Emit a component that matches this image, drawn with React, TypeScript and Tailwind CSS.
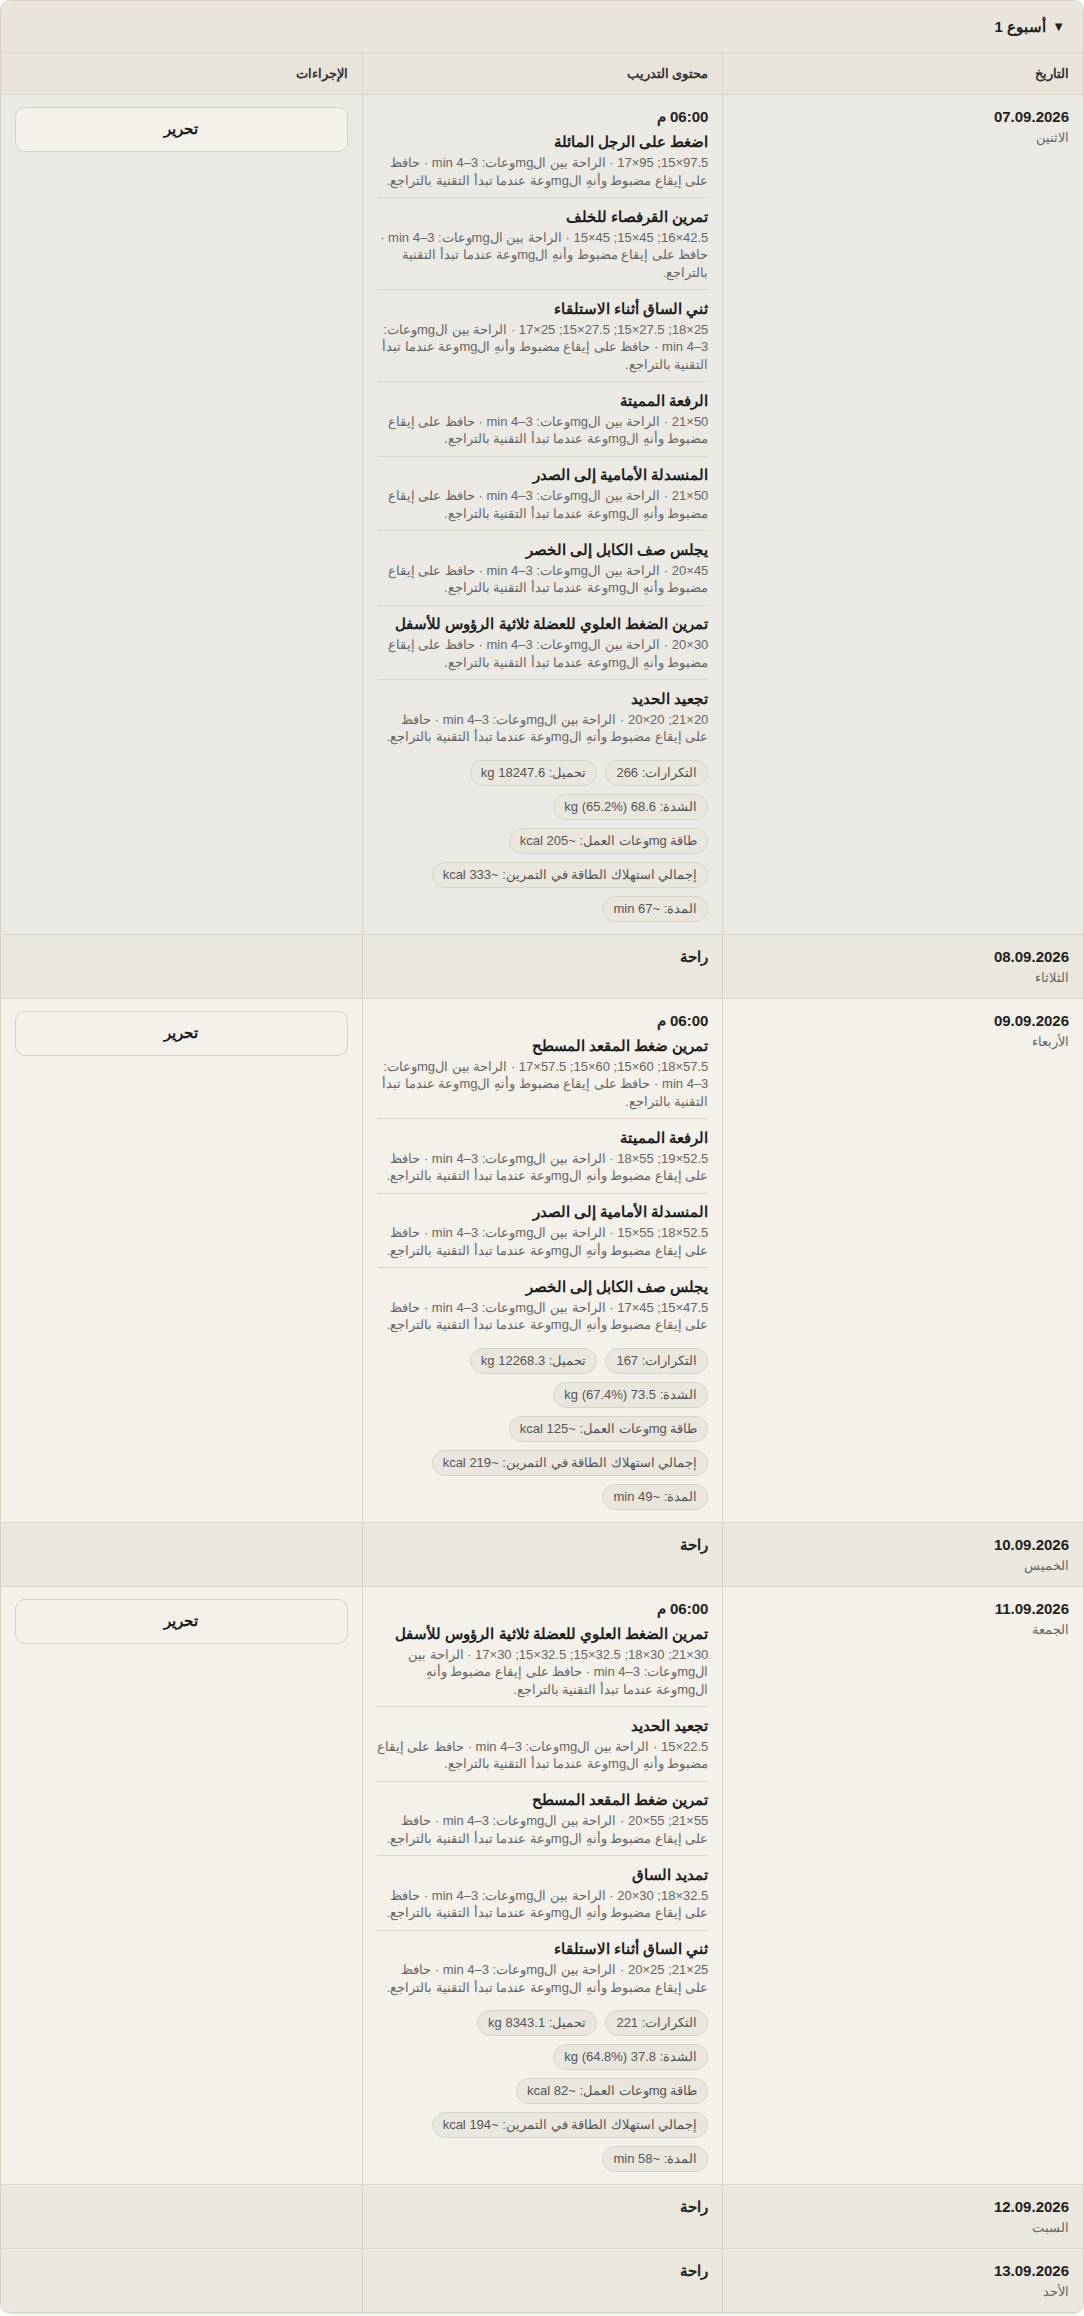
import React from "react";

const TAIL =
  " · الراحة بين الmgوعات: 3–4 min · حافظ على إيقاع مضبوط وأنهِ الmgوعة عندما تبدأ التقنية بالتراجع.";

type Exercise = { name: string; sets: string };
type Day = {
  date: string;
  day: string;
  rest?: boolean;
  muted?: boolean;
  time?: string;
  exercises?: Exercise[];
  stats?: string[][];
};

const days: Day[] = [
  {
    date: "07.09.2026",
    day: "الاثنين",
    muted: true,
    time: "06:00 م",
    exercises: [
      { name: "اضغط على الرجل المائلة", sets: "97.5×15; 95×17" },
      { name: "تمرين القرفصاء للخلف", sets: "42.5×16; 45×15; 45×15" },
      { name: "ثني الساق أثناء الاستلقاء", sets: "25×18; 27.5×15; 27.5×15; 25×17" },
      { name: "الرفعة المميتة", sets: "50×21" },
      { name: "المنسدلة الأمامية إلى الصدر", sets: "50×21" },
      { name: "يجلس صف الكابل إلى الخصر", sets: "45×20" },
      { name: "تمرين الضغط العلوي للعضلة ثلاثية الرؤوس للأسفل", sets: "30×20" },
      { name: "تجعيد الحديد", sets: "20×21; 20×20" },
    ],
    stats: [
      ["التكرارات: 266", "تحميل: 18247.6 kg"],
      ["الشدة: 68.6 kg (65.2%)"],
      ["طاقة mgوعات العمل: ~205 kcal"],
      ["إجمالي استهلاك الطاقة في التمرين: ~333 kcal"],
      ["المدة: ~67 min"],
    ],
  },
  { date: "08.09.2026", day: "الثلاثاء", rest: true },
  {
    date: "09.09.2026",
    day: "الأربعاء",
    time: "06:00 م",
    exercises: [
      { name: "تمرين ضغط المقعد المسطح", sets: "57.5×18; 60×15; 60×15; 57.5×17" },
      { name: "الرفعة المميتة", sets: "52.5×19; 55×18" },
      { name: "المنسدلة الأمامية إلى الصدر", sets: "52.5×18; 55×15" },
      { name: "يجلس صف الكابل إلى الخصر", sets: "47.5×15; 45×17" },
    ],
    stats: [
      ["التكرارات: 167", "تحميل: 12268.3 kg"],
      ["الشدة: 73.5 kg (67.4%)"],
      ["طاقة mgوعات العمل: ~125 kcal"],
      ["إجمالي استهلاك الطاقة في التمرين: ~219 kcal"],
      ["المدة: ~49 min"],
    ],
  },
  { date: "10.09.2026", day: "الخميس", rest: true },
  {
    date: "11.09.2026",
    day: "الجمعة",
    time: "06:00 م",
    exercises: [
      { name: "تمرين الضغط العلوي للعضلة ثلاثية الرؤوس للأسفل", sets: "30×21; 30×18; 32.5×15; 32.5×15; 30×17" },
      { name: "تجعيد الحديد", sets: "22.5×15" },
      { name: "تمرين ضغط المقعد المسطح", sets: "55×21; 55×20" },
      { name: "تمديد الساق", sets: "32.5×18; 30×20" },
      { name: "ثني الساق أثناء الاستلقاء", sets: "25×21; 25×20" },
    ],
    stats: [
      ["التكرارات: 221", "تحميل: 8343.1 kg"],
      ["الشدة: 37.8 kg (64.8%)"],
      ["طاقة mgوعات العمل: ~82 kcal"],
      ["إجمالي استهلاك الطاقة في التمرين: ~194 kcal"],
      ["المدة: ~58 min"],
    ],
  },
  { date: "12.09.2026", day: "السبت", rest: true },
  { date: "13.09.2026", day: "الأحد", rest: true },
];

function Chip({ label }: { label: string }) {
  return (
    <span className="rounded-full border border-[#d8d4c8] bg-[#e9e6de] px-2.5 py-[3px] text-[13px] leading-[18px] text-[#555]">
      {label}
    </span>
  );
}

function DayRow({ d }: { d: Day }) {
  const bg = d.rest ? "bg-[#eae7de]" : d.muted ? "bg-[#ebe9e3]" : "bg-[#f3f1ea]";
  return (
    <div className={`grid grid-cols-3 border-t border-[#dad6ca] ${bg}`}>
      <div className="border-l border-[#dad6ca] px-3.5 py-3">
        <div className="text-[15px] font-bold leading-5 text-[#222]">{d.date}</div>
        <div className="mt-[3px] text-[13px] leading-4 text-[#666]">{d.day}</div>
      </div>
      <div className="border-l border-[#dad6ca] px-3.5 py-3">
        {d.rest ? (
          <div className="text-[15px] font-bold leading-5 text-[#222]">راحة</div>
        ) : (
          <>
            <div className="text-[15px] font-bold leading-5 text-[#222]">{d.time}</div>
            <div>
              {d.exercises!.map((ex, i) => (
                <div
                  key={i}
                  className="border-b border-[#dad6ca] pb-2 pt-[8.5px] first:pt-[5px] last:border-b-0"
                >
                  <div className="text-[15px] font-bold leading-5 text-[#1f1f1f]">{ex.name}</div>
                  <div className="mt-0.5 text-[13px] leading-[17.5px] text-[#666]">
                    {ex.sets}
                    {TAIL}
                  </div>
                </div>
              ))}
            </div>
            <div className="mt-1.5 flex flex-col gap-2">
              {d.stats!.map((line, i) => (
                <div key={i} className="flex flex-wrap gap-2">
                  {line.map((s) => (
                    <Chip key={s} label={s} />
                  ))}
                </div>
              ))}
            </div>
          </>
        )}
      </div>
      <div className="px-3.5 py-3">
        {!d.rest && (
          <button className="flex h-[45px] w-full items-center justify-center rounded-[10px] border border-[#d6d2c6] bg-[#f3f1ea] text-[15px] font-bold text-[#1a1a1a]">
            تحرير
          </button>
        )}
      </div>
    </div>
  );
}

export default function App() {
  return (
    <div className="min-h-screen bg-white font-['Liberation_Sans',sans-serif]" dir="rtl">
      <div className="overflow-hidden rounded-[10px] border border-[#d6d1c3] shadow-sm">
        <div className="flex h-[51px] items-center gap-1.5 bg-[#e9e5dc] px-[18px] text-[15px] font-bold leading-5 text-[#222]">
          <span className="text-[13px] leading-5">▼</span>
          <span>أسبوع 1</span>
        </div>
        <div className="grid grid-cols-3 border-t border-[#dad6ca] bg-[#e8e4da] text-[13px] font-bold leading-[17px] text-[#333]">
          <div className="border-l border-[#dad6ca] px-3.5 py-3">التاريخ</div>
          <div className="border-l border-[#dad6ca] px-3.5 py-3">محتوى التدريب</div>
          <div className="px-3.5 py-3">الإجراءات</div>
        </div>
        {days.map((d) => (
          <DayRow key={d.date} d={d} />
        ))}
      </div>
    </div>
  );
}
